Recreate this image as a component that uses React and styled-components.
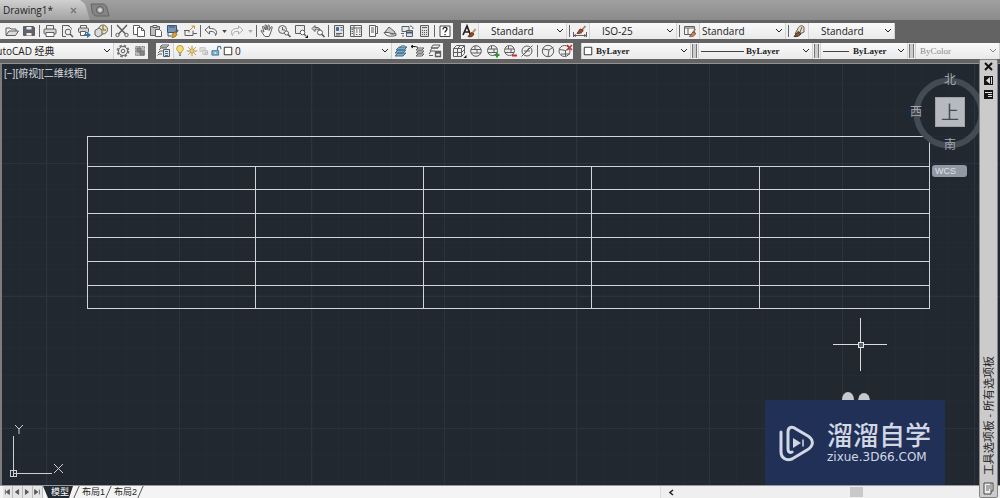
import React from 'react'
import styled, { createGlobalStyle } from 'styled-components'

const GlobalStyle = createGlobalStyle`
* {
    box-sizing: border-box;
}
body {
    margin: 0;
    background: #656565;
    font-family: "Open Sans", "Noto Sans CJK SC", sans-serif;
    font-size: 10px;
    color: #222;
}
button, select, input {
    font: inherit;
    color: inherit;
    margin: 0;
    padding: 0;
    border: 0;
    background: transparent;
}
`;

/* 16x16 toolbar glyphs */
const icons = {
    open: <><path d="M2 12V5h4l1 1h5v2" /><path d="M2 12.500 5 8h9.500l-3 4.500z" fill="#d9dde0" /></>,
    save: <><path d="M2.500 3.500h10l1 1v8h-11z" fill="#596573" /><path d="M5 3.500h6v3.500H5zM5 12.500V9.500h6v3" fill="#eee" /></>,
    print: <><path d="M4.500 6V2.500h7V6" /><rect x="2" y="6" width="12" height="5" rx="1" fill="#d4d6d8" /><path d="M4 9.500h8v4H4z" fill="#fff" /></>,
    preview: <><path d="M10 4V2.500H3.500v11H7M9.500 2.500l3 3v1" /><circle cx="9" cy="9" r="2.800" fill="#eaf1f5" /><path d="m11 11 3 3" strokeWidth="1.600" /></>,
    publish: <><path d="M4.500 5V2.500h6V5" /><rect x="2.500" y="5" width="10" height="4.500" rx="1" fill="#cfd2d5" /><path d="M4.500 8.500h5v4h-5z" fill="#fff" /><path d="M8 11h3V9l4 3-4 3v-2H8z" fill="#2d79b0" stroke="none" /></>,
    sphere: <><circle cx="10" cy="6.500" r="4.500" fill="#f0e3a7" /><path d="M2 7.500 6 5l3 2v5l-4 2-3-2z" fill="#d9dcdd" /><path d="M10 3v4h3" /></>,
    cut: <><path d="m3 2 8.500 9M13 2 4.500 11" strokeWidth="1.500" /><circle cx="3.500" cy="12" r="1.700" /><circle cx="12.500" cy="12" r="1.700" /></>,
    copy: <><path d="M2.500 2.500h6v9h-6z" fill="#fff" /><path d="M6.500 4.500h4l3 3v6h-7z" fill="#fff" /><path d="M10.500 4.500v3h3" /></>,
    paste: <><path d="M2.500 3.500h9v9h-9z" fill="#c0bdb6" /><path d="M5 2.500h4v2H5z" fill="#eee" /><path d="M7.500 6.500h4l2 2v5h-6z" fill="#fff" /></>,
    match: <><path d="M2.500 2.500h9v7h-9z" fill="#7996b5" stroke="#3b5676" /><path d="M4 4h6M3 10v3h3" stroke="#3b5676" /><path d="m13 7-3 3" strokeWidth="2" stroke="#58616a" /><path d="M7 11.500 10 9l2 2.500c-1 2-3 3-5 3z" fill="#dda33a" stroke="#a0702a" /></>,
    block: <><path d="M3 7.500v5h8v-5M2 7.500h5v2" /><path d="m7 8 5-5m-2.500 0h3v3" stroke="#d28d42" /><path d="M11 10.500h4M3 12.500h3" /></>,
    undo: <path d="M6.500 3 2 7l4.500 4V8.500c4-.5 6 1 6 4C15.500 8 12 5 6.500 5.500z" fill="#eef0f2" />,
    redo: <path d="M9.500 3 14 7l-4.500 4V8.500c-4-.5-6 1-6 4C.5 8 4 5 9.500 5.500z" fill="#f3f3f3" stroke="#aaa" />,
    pan: <path d="m5.500 13-3.500-5c0-1 1-1 2 .5L5 9 3.500 4c0-1 1-1 1.500 0l1.500 3L6 2.500c0-1 1.300-1 1.500 0L8 7l1-4.500c.2-1 1.400-.8 1.300.2L10 7.500 12 4c.5-1 1.500-.4 1.200.6L11.500 10 10 13.500H6z" fill="#f5f5f5" />,
    zoom: <><circle cx="6.500" cy="6.500" r="4" fill="#e5e8eb" /><path d="M6.500 4v3h2.500" /><circle cx="10.500" cy="10" r="2" fill="#fff" /><path d="m12 11.500 2.500 2.500" strokeWidth="1.700" /></>,
    zoomWindow: <><path d="M2.500 2.500h9v8h-9z" fill="#e8ebed" /><circle cx="9.500" cy="9.500" r="2.300" fill="#fff" /><path d="m11 11 2 2" strokeWidth="1.500" /><path d="m15 12v3h-3z" fill="#111" stroke="none" /></>,
    zoomPrev: <><path d="M2 5.500 5 2.500v2c3-.5 5 .5 5 2.500-1-1-3-1-5-.5v2z" fill="#d0d3d6" /><circle cx="10" cy="9.500" r="2.500" fill="#fff" /><path d="m11.500 11 3 3" strokeWidth="1.700" /></>,
    props: <><path d="M3.500 2.500h9v11h-9z" fill="#e2e5e8" /><path d="M5.500 4.500h2v3h-2z" fill="#416b96" stroke="#416b96" /><path d="M9.500 4.500h2M9.500 7h2M5 10.500h6M5 12h4" /></>,
    design: <><path d="M2.500 2.500h11v11h-11z" fill="#f2f2f2" /><path d="M6 3v10M2.500 5h11M8 7h1.500M11 7h1.500M8 9h1.500M11 9h1.500M8 11.500h1.500M11 11.500h1.500" /><path d="M3.500 6.500h1.500M3.500 8.500h1.500M3.500 10.500h1.500" stroke="#386ca0" /></>,
    palettes: <><path d="M4.500 2.500h6v11h-6z" fill="#f7f7f7" /><path d="M10.500 3.500h2v7h-2M6 5h3M6 7h3M6 9h3" /></>,
    sheet: <><path d="m3 9 4-5 6 5-1 2z" fill="#ccc" /><path d="M2 9.500h5c1 2 4 2 7 1v2c-4 1-8 1-10-.5z" fill="#eee" /></>,
    markup: <><path d="M3 3.500h7v5H3z" fill="#e4e7e9" /><path d="M5 10.500H2M5 13H3M11 3c2 0 3 1 3 3" /><path d="M7.500 7.500h6v6h-6z" fill="#d7e1ea" /><path d="M7.500 9.500h6" stroke="#345a82" strokeWidth="2" /></>,
    calc: <><path d="M4.500 2.500h8v11h-8z" fill="#ddd" /><path d="M6 4.500h5M6 7.500h1M8 7.500h1M10 7.500h1M6 9.500h1M8 9.500h1M10 9.500h1M6 11.500h1M8 11.500h1M10 11.500h1" /></>,
    textStyle: <><path d="M2 12 6 3l3.500 9M3.500 9h5" strokeWidth="1.700" stroke="#222" /><path d="m14.500 6-3 4" stroke="#b89268" strokeWidth="2" /><path d="m7 13.500 3.500-4L13 11c-1 2.500-3.500 3.500-6 2.500z" fill="#9b4b22" stroke="#6b3218" /></>,
    dimStyle: <><path d="M1.500 9v5M14.500 9v5M2 12.500h12m-10-1-2 1 2 1m8-2 2 1-2 1" /><path d="m13.500 3-3.500 4" stroke="#a28064" strokeWidth="1.800" /><path d="M5 10.500 8 6l3 1c0 2.500-2.500 4-6 3.500z" fill="#a04d2c" stroke="#753a22" /></>,
    tableStyle: <><path d="M2.500 3.500h10v8h-10z" fill="#f6f6f6" /><path d="M2.500 5h10M6 5v6.500" /><path d="M13.500 6 11 9" stroke="#a28064" strokeWidth="1.500" /><path d="M7.500 13.500 11 9l2.500 1c0 2.500-3 4-6 3.500z" fill="#c88962" stroke="#815039" /></>,
    leaderStyle: <><path d="M4 11 7.500 4.500C9 2 13 2 13 5v4l-2 1z" fill="#e9ddbe" /><path d="m11 4-2 5" /><path d="M3 13.500 7 8.500l3 2c-1 2.500-4 3.500-7 3z" fill="#7b573e" stroke="#4b372c" /></>,
    gear: <><circle cx="8" cy="8" r="5.500" strokeDasharray="2.500 1.820" strokeWidth="1.800" stroke="#777" /><circle cx="8" cy="8" r="4.500" fill="#eee" /><circle cx="8" cy="8" r="1.800" /></>,
    workspace: <><path d="M3.500 3.500h9v9h-9z" fill="#bcbcbc" strokeDasharray="2 1" stroke="#888" /><path d="M5 5h4v4H5zM8 8h4v4H8z" fill="#888" stroke="#777" /></>,
    layerProps: <><path d="m4 4 2-2h7l-2 2zM3 7l2-2h6M2 10l2-2h3M1.500 12.500 3 11h3" fill="#f6f6f6" /><path d="M7.500 6.500h6v7h-6z" fill="#dce6ec" /><path d="M9 8.500h3M9 10.500h3M9 12.500h3" stroke="#3c75a1" /></>,
    bulb: <><path d="M6 10c0-2-2.500-2.500-2.500-5a4 4 0 0 1 9 0c0 2.500-2.500 3-2.500 5z" fill="#f4dc6e" stroke="#a28937" /><path d="M6.500 12h3M7 14h2" strokeWidth="1.600" /></>,
    sun: <><circle cx="8" cy="8" r="3" fill="#f1d262" stroke="#9c7b30" /><path d="M8 1v3M8 12v3M1 8h3M12 8h3M3 3l2 2M11 11l2 2M13 3l-2 2M5 11l-2 2" stroke="#b58d38" strokeWidth="1.300" /></>,
    freeze: <><path d="M2.500 3.500h7v5h-7z" fill="#ddd" stroke="#bbb" /><path d="M6.500 7.500h6v5h-6z" fill="#eee" stroke="#b3b3b3" /><circle cx="11" cy="11" r="2" fill="#ddd" stroke="#aaa" /></>,
    lock: <><path d="M10 7V4c0-3 4.500-3 4.500 0v1.500" strokeWidth="1.500" stroke="#456e8d" /><path d="M2.500 7.500h9v6h-9z" fill="#79b4d9" stroke="#386486" /><path d="M7 9.500v2" stroke="#fff" strokeWidth="1.500" /></>,
    swatch: <path d="M3 3h10v10H3z" fill="#fff" stroke="#222" strokeWidth="1.200" />,
    layerCurrent: <><path d="m3 7 3-3h8l-3 3zM2 10l3-3h8l-3 3zM2 13l3-3h8l-3 3z" fill="#77afd1" stroke="#486f88" /><path d="M7 5c1-3 4-3 6-1" stroke="#336c96" /></>,
    layerPrev: <><path d="m6 7 2-2h6l-2 2zM6 10l2-2h6l-2 2zM6 13l2-2h6l-2 2z" fill="#eee" /><path d="M1 3.500h3c2 0 3 .5 4 1M3 2 1 3.500 3 5" stroke="#111" /></>,
    layerState: <><path d="m4 5 2-3h7l-2 3zM3 8l2-3h6M2 11l2-3h4" fill="#eee" /><path d="M8.500 8.500h5v5h-5zM8.500 10h5" fill="#f5f5f5" strokeWidth="1.300" /><path d="M2 12.500h4" /></>,
    mesh: <><path d="m2.500 5.500 3-3h8v8l-3 3h-8zM2.500 5.500h8v8M10.500 5.500l3-3M6.500 5.500v8M2.500 9.500h8l3-3M6.500 5.500l3-3" /><path d="M15.500 12v3h-3z" fill="#111" stroke="none" /></>,
    globe: <><circle cx="8" cy="8" r="5.300" fill="#eee" /><path d="M3 6.500h10M3 10h10M7 3v3.500M9 6.500V10" /></>,
    globeAdd: <><circle cx="7.500" cy="7.500" r="5" fill="#eee" /><path d="M3 6h9M3 9.500h9M6.500 3v3M9 6v3.500" /><path d="M12 9.500v5M9.500 12h5" stroke="#359436" strokeWidth="2" /></>,
    globeRemove: <><circle cx="7.500" cy="7.500" r="5" fill="#eee" /><path d="M3 6h9M3 9.500h9M6.500 3v3M9 6v3.500" /><path d="M10 12.500h5" stroke="#c72f2f" strokeWidth="2" /></>,
    crease: <><circle cx="8" cy="8" r="5" /><path d="M2.500 13.500 13.500 2.500M5 8h6M6 10.500 10 5" /></>,
    solid: <><circle cx="8" cy="8" r="5.700" /><path d="m3 6 6 1 4.500-3M9 7l-1 6.500" /></>,
    solidRemove: <><circle cx="7.500" cy="8" r="5.500" /><path d="m2.500 6.500 6 1 4-2M8.500 7.500v6M4 11h9" /><path d="m10 2 5 5M15 2l-5 5" stroke="#c7302d" strokeWidth="1.600" /></>,
    help: <><path d="M3 3h10v10.500H3z" fill="#fff" stroke="#444" /><path d="M6 6.500c0-3 4-2.500 4-.5C10 7.500 8 8 8 9.500M8 11v1.300" stroke="#222" strokeWidth="1.300" /></>,
};

const Icon = ({ name }) => (
    <Glyph viewBox="0 0 16 16" aria-hidden="true">{icons[name]}</Glyph>
)

const Tool = ({ name, label, disabled }) => (
    <ToolButton aria-label={label || name} disabled={disabled}>
        <Icon name={name} />
    </ToolButton>
)

const Dropdown = ({ label, options, width, indent, disabled, lead, serif }) => (
    <Field $width={width} $disabled={disabled}>
        {lead && <Lead>{lead}</Lead>}
        <Select
            aria-label={label}
            disabled={disabled}
            $indent={indent}
            $serif={serif}
        >
            {options.map((option) => <option key={option}>{option}</option>)}
        </Select>
        <Chevron viewBox="0 0 8 6"><path d="m1 1 3 3 3-3" /></Chevron>
    </Field>
)

const fileTools = ['open', 'save', '|', 'print', 'preview', 'publish', 'sphere', '|', 'cut', 'copy', 'paste', 'match', 'block', '|'];
const viewTools = ['|', 'pan', 'zoom', 'zoomWindow', 'zoomPrev', '|', 'props', 'design', 'palettes', 'sheet', 'markup', 'calc', '|', 'help'];
const meshTools = ['mesh', 'globe', 'globeAdd', 'globeRemove', 'crease', '|', 'solid', 'solidRemove'];

const ToolList = ({ names }) => names.map((name, i) => (
    name === '|' ? <Divider key={i} /> : <Tool key={i} name={name} />
))

const More = ({ label, disabled }) => (
    <MoreButton aria-label={label} disabled={disabled}>
        <svg width="5" height="3" viewBox="0 0 6 4"><path d="M0 0h6L3 4z" fill="currentColor" /></svg>
    </MoreButton>
)

const columns = [256, 424, 592, 760];
const rows = [166, 189, 213, 237, 261, 285];
const range = (from, to, step) => {
    const out = [];
    for (let n = from; n < to; n += step) out.push(Math.round(n));
    return out;
}

const Drawing = () => (
    <DrawingSvg shapeRendering="crispEdges" aria-label="Drawing">
        <g transform="translate(-2 -64)">
            <g fill="#242b34">
                {range(20, 3000, 26.5).map((x) => <rect key={x} x={x} y="64" width="1" height="2000" />)}
                {range(83, 2000, 26.5).map((y) => <rect key={y} x="2" y={y} width="3000" height="1" />)}
            </g>
            <g fill="#2b333d">
                {range(46, 3000, 132.6).map((x) => <rect key={x} x={x} y="64" width="1" height="2000" />)}
                {range(163, 2000, 132.5).map((y) => <rect key={y} x="2" y={y} width="3000" height="1" />)}
            </g>
            <g fill="#d0d5d9">
                {[136, ...rows, 308].map((y) => <rect key={y} x="87" y={y} width="843" height="1" />)}
                <rect x="87" y="136" width="1" height="173" />
                <rect x="929" y="136" width="1" height="173" />
                {columns.map((x) => <rect key={x} x={x - 1} y="166" width="1" height="143" />)}
            </g>
            <g fill="#d8dcdf">
                <rect x="833" y="344" width="54" height="1" />
                <rect x="860" y="318" width="1" height="53" />
                <path d="M858 342h5v5h-5z" fill="#59616a" stroke="#e4e7e9" />
            </g>
        </g>
    </DrawingSvg>
)

const App = () => {
    return (
        <Page>
            <GlobalStyle />
            <TabBar>
                <FileTab>
                    <span>Drawing1*</span>
                    <CloseTab aria-label="Close drawing">
                        <svg width="7" height="7" viewBox="0 0 7 7"><path d="m1 1 5 5M6 1 1 6" stroke="#777" strokeWidth="1.400" /></svg>
                    </CloseTab>
                </FileTab>
                <NewTab aria-label="New drawing">
                    <svg width="20" height="14" viewBox="0 0 20 14">
                        <path d="M1 1h12c2 0 3 1 4 4l2 8H7C4 13 3 11 2 8z" fill="#858585" stroke="#656565" />
                        <circle cx="10" cy="7" r="3.500" fill="#a4a4a4" stroke="#5c5c5c" />
                        <path d="M8 7h4M10 5v4" stroke="#eee" />
                    </svg>
                </NewTab>
            </TabBar>

            <Toolbars>
                <ToolbarRow>
                    <Toolbar $start>
                        <ToolList names={fileTools} />
                        <Tool name="undo" />
                        <More label="Undo list" />
                        <Tool name="redo" disabled />
                        <More label="Redo list" disabled />
                        <ToolList names={viewTools} />
                    </Toolbar>
                    <Toolbar>
                        <Tool name="textStyle" label="Text style" />
                        <Dropdown label="Text style list" options={['Standard']} width={89} indent={12} />
                        <Divider />
                        <Tool name="dimStyle" label="Dimension style" />
                        <Dropdown label="Dimension style list" options={['ISO-25']} width={88} indent={12} />
                        <Divider />
                        <Tool name="tableStyle" label="Table style" />
                        <Dropdown label="Table style list" options={['Standard']} width={87} indent={2} />
                        <Divider />
                        <Tool name="leaderStyle" label="Multileader style" />
                        <Dropdown label="Multileader style list" options={['Standard']} width={87} indent={12} />
                    </Toolbar>
                </ToolbarRow>
                <ToolbarRow>
                    <Toolbar $clipped>
                        <Dropdown label="Workspace" options={['AutoCAD 经典']} width={126} indent={1} />
                        <Tool name="gear" label="Workspace settings" />
                        <Tool name="workspace" label="My workspace" />
                    </Toolbar>
                    <Toolbar>
                        <Tool name="layerProps" label="Layer properties" />
                        <Dropdown
                            label="Layer"
                            options={['0']}
                            width={219}
                            indent={1}
                            lead={['bulb', 'sun', 'freeze', 'lock', 'swatch'].map((name) => <Icon key={name} name={name} />)}
                        />
                        <Tool name="layerCurrent" />
                        <Tool name="layerPrev" />
                        <Tool name="layerState" />
                    </Toolbar>
                    <Toolbar>
                        <ToolList names={meshTools} />
                    </Toolbar>
                    <Toolbar $grow>
                        <Dropdown label="Color" options={['ByLayer']} width={110} serif lead={<Icon name="swatch" />} />
                        <Grip />
                        <Dropdown label="Linetype" options={['ByLayer']} width={115} indent={2} serif lead={<LineSample $width={43} />} />
                        <Grip />
                        <Dropdown label="Lineweight" options={['ByLayer']} width={88} indent={4} serif lead={<LineSample $width={26} />} />
                        <Grip />
                        <Dropdown label="Plot style" options={['ByColor']} serif indent={4} disabled />
                    </Toolbar>
                </ToolbarRow>
            </Toolbars>

            <Canvas>
                <Drawing />
                <ViewLabels>
                    <button>[−]</button>
                    <button>[俯视]</button>
                    <button>[二维线框]</button>
                </ViewLabels>
                <ViewCube>
                    <Compass viewBox="0 0 72 72"><circle cx="36" cy="36" r="32.500" /></Compass>
                    <CubeFace>上</CubeFace>
                    <Direction $area="n">北</Direction>
                    <Direction $area="w">西</Direction>
                    <Direction $area="s">南</Direction>
                    <WcsButton>WCS</WcsButton>
                </ViewCube>
                <UcsIcon viewBox="0 0 66 58">
                    <path d="M4 11v40M4 48h39" shapeRendering="crispEdges" />
                    <path d="M1 45h6v6H1z" shapeRendering="crispEdges" />
                    <path d="m6 0 4 4 4-4M10 4v5M45 39l9 9M54 39l-9 9" />
                </UcsIcon>
                <Watermark>
                    <Ears viewBox="0 0 32 8">
                        <ellipse cx="8" cy="8" rx="6" ry="8" />
                        <ellipse cx="24" cy="9" rx="6" ry="8" />
                    </Ears>
                    <svg width="35" height="38" viewBox="0 0 35 38" fill="none" stroke="#d2d7e4" strokeLinecap="round">
                        <path d="M2 8v20c0 6 5 9 11 7l15-9c7-4 7-10 1-14L17 5C13 2 9 3 9 8v17c0 3 2 4 4 3" strokeWidth="3" />
                        <path d="M14 14v10l8-5z" fill="#d2d7e4" stroke="none" />
                        <path d="M24 16v6" strokeWidth="1.500" />
                    </svg>
                    <Brand>
                        <strong>溜溜自学</strong>
                        <span>zixue.3D66.COM</span>
                    </Brand>
                </Watermark>
            </Canvas>

            <BottomBar>
                <LayoutTabs>
                    {['M3 2v6M8 2 4 5l4 3z', 'M7 2 3 5l4 3z', 'M3 2l4 3-4 3z', 'M2 2l4 3-4 3zM8 2v6'].map((d, i) => (
                        <NavButton key={d} aria-label={['First', 'Previous', 'Next', 'Last'][i]}>
                            <svg width="8" height="8" viewBox="0 0 10 10"><path d={d} fill="#555" stroke="#555" /></svg>
                        </NavButton>
                    ))}
                    <LayoutTab $active>模型</LayoutTab>
                    <Slash />
                    <LayoutTab>布局1</LayoutTab>
                    <Slash />
                    <LayoutTab>布局2</LayoutTab>
                    <Slash />
                </LayoutTabs>
                <ScrollArea>
                    <ScrollButton aria-label="Scroll left">
                        <svg width="5" height="7" viewBox="0 0 5 7"><path d="M4 1 1 3.500 4 6" fill="none" stroke="#222" strokeWidth="1.500" /></svg>
                    </ScrollButton>
                    <ScrollBar type="range" defaultValue="59" aria-label="Horizontal scroll" />
                </ScrollArea>
            </BottomBar>

            <Palette>
                <PaletteButton aria-label="Close palette">
                    <svg width="9" height="9" viewBox="0 0 9 9"><path d="m1 1 7 7M8 1 1 8" stroke="#111" strokeWidth="2" /></svg>
                </PaletteButton>
                <PaletteButton aria-label="Auto-hide">
                    <svg width="9" height="9" viewBox="0 0 9 9"><path d="M0 0h9v9H0z" fill="#151515" /><path d="M6 1v7L2 4.500zM7 1h1v7H7z" fill="#ddd" /></svg>
                </PaletteButton>
                <PaletteButton aria-label="Palette menu">
                    <svg width="9" height="9" viewBox="0 0 9 9"><path d="M0 0h9v9H0z" fill="#151515" /><path d="M1 2h7v1H1zM4 4h4v1H4zM4 6h4v1H4z" fill="#ddd" /></svg>
                </PaletteButton>
                <PaletteTitle>工具选项板 - 所有选项板</PaletteTitle>
                <svg width="11" height="13" viewBox="0 0 11 13"><path d="M1 1h9v8H8v3H1z" fill="#eee" stroke="#444" /><path d="M3 4h4M3 6h4M3 8h3M8 1v8" stroke="#666" /></svg>
            </Palette>
        </Page>
    )
}

export default App

const Page = styled.div`
position: relative;
min-height: 100vh;
display: flex;
flex-direction: column;
overflow: hidden;
`;

const TabBar = styled.header`
height: 20px;
display: flex;
align-items: stretch;
background: linear-gradient(#a0a0a0, #8b8b8b);
`;
const FileTab = styled.div`
width: 90px;
padding: 0 13px 0 3px;
display: flex;
align-items: center;
justify-content: space-between;
line-height: 20px;
background: linear-gradient(#d0d0d0, #a2a2a2);
clip-path: polygon(0 0, 80px 0, 85px 4px, 90px 100%, 0 100%);
`;
const CloseTab = styled.button`
display: flex;
`;
const NewTab = styled.button`
display: flex;
align-items: center;
`;

const Toolbars = styled.div`
padding: 3px 0 4px;
display: flex;
flex-direction: column;
gap: 4px;
background: #636363;
border-bottom: 1px solid #929292;
`;
const ToolbarRow = styled.div`
height: 16px;
display: flex;
gap: 8px;
`;
const Toolbar = styled.div`
display: flex;
align-items: center;
gap: 1px;
min-width: 0;
flex: ${props => props.$grow ? '1' : 'none'};
padding-left: ${props => props.$start ? '4px' : '0'};
margin-left: ${props => props.$clipped ? '-12px' : '0'};
background: #f0f0f0;
`;
const Glyph = styled.svg`
width: 16px;
height: 16px;
flex: none;
fill: none;
stroke: #5f5f5f;
`;
const ToolButton = styled.button`
width: 16px;
height: 16px;
display: flex;
`;
const MoreButton = styled.button`
width: 8px;
display: flex;
justify-content: center;
color: ${props => props.disabled ? '#aaa' : '#444'};
`;
const Divider = styled.span`
width: 3px;
height: 12px;
border-left: 1px solid #666;
margin-left: 1px;
margin-right: -1px;
`;
const Grip = styled.span`
width: 5px;
height: 14px;
border: 1px solid #777;
border-width: 0 1px;
background: #ccc;
`;
const Field = styled.div`
width: ${props => props.$width ? `${props.$width}px` : 'auto'};
flex: ${props => props.$width ? 'none' : '1'};
height: 16px;
display: grid;
grid-template-columns: auto 1fr 10px;
align-items: center;
border: 1px solid #d2d2d2;
border-width: 0 1px;
background: linear-gradient(#fafafa, #e9e9e9);
color: ${props => props.$disabled ? '#8a8a8a' : '#222'};
`;
const Lead = styled.span`
display: flex;
align-items: center;
grid-area: 1 / 1;

svg {
    width: 12px;
    height: 12px;
}
`;
const LineSample = styled.i`
width: ${props => props.$width}px;
height: 1px;
margin-left: 2px;
background: #444;
`;
const Select = styled.select`
grid-area: 1 / 2 / 2 / 4;
width: 100%;
height: 16px;
appearance: none;
padding-left: ${props => props.$indent || 2}px;
font-family: ${props => props.$serif ? '"Liberation Serif", serif' : 'inherit'};
font-size: ${props => props.$serif ? '9px' : '10px'};
font-weight: ${props => props.$serif && !props.disabled ? 'bold' : 'normal'};
line-height: 16px;
opacity: 1;
`;
const Chevron = styled.svg`
grid-area: 1 / 3;
width: 8px;
height: 6px;
fill: none;
stroke: currentColor;
pointer-events: none;
`;

const Canvas = styled.main`
position: relative;
flex: 1;
min-height: 400px;
border-left: 2px solid #7d7d7d;
background: #212830;
overflow: hidden;
`;
const DrawingSvg = styled.svg`
position: absolute;
width: 100%;
height: 100%;
`;
const ViewLabels = styled.div`
position: absolute;
left: 2px;
top: 4px;
display: flex;
color: #d6dade;
font-family: "Liberation Sans", "Noto Sans CJK SC", sans-serif;
line-height: 12px;
`;
const ViewCube = styled.div`
position: absolute;
right: 12px;
top: 10px;
display: grid;
grid-template-columns: 12px 13px 30px 23px;
grid-template-rows: 12px 11px 30px 12px 12px;
grid-template-areas:
    ". . n ."
    ". . . ."
    "w . face ."
    ". . . ."
    ". . s .";
place-items: center;
`;
const Compass = styled.svg`
grid-area: 1 / 1 / 6 / 5;
width: 72px;
height: 72px;
fill: none;
stroke: #434b55;
stroke-width: 6px;
`;
const CubeFace = styled.button`
grid-area: face;
width: 30px;
height: 30px;
background: #b6bac0;
border: 1px solid #9ea3a9;
color: #404b57;
font-size: 18px;
line-height: 26px;
`;
const Direction = styled.button`
grid-area: ${props => props.$area};
color: #a3a8ae;
font-size: 12px;
line-height: 12px;
`;
const WcsButton = styled.button`
position: absolute;
right: 21px;
bottom: -26px;
width: 35px;
height: 12px;
padding-left: 3px;
border-radius: 3px;
background: #9299a5;
color: #dde0e4;
font-family: "Liberation Sans", sans-serif;
font-size: 9px;
line-height: 12px;
text-align: left;
`;
const UcsIcon = styled.svg`
position: absolute;
left: 7px;
bottom: 2px;
width: 66px;
height: 58px;
fill: none;
stroke: #ccd0d4;
`;
const Watermark = styled.div`
position: absolute;
right: 55px;
bottom: 0;
width: 180px;
height: 85px;
padding-left: 14px;
display: flex;
align-items: center;
gap: 13px;
background: #213056;
color: #d2d7e4;
`;
const Ears = styled.svg`
position: absolute;
left: 75px;
bottom: 100%;
width: 32px;
height: 8px;
fill: #c6cacd;
`;
const Brand = styled.div`
display: flex;
flex-direction: column;
padding-bottom: 4px;
white-space: nowrap;

strong {
    font-size: 26px;
    font-weight: 500;
    line-height: 32px;
}
span {
    font-family: "DejaVu Sans", sans-serif;
    font-size: 12px;
    line-height: 12px;
}
`;

const BottomBar = styled.footer`
height: 13px;
display: flex;
background: #efefef;
border-top: 1px solid #999;
`;
const LayoutTabs = styled.nav`
width: 66%;
padding-left: 3px;
display: flex;
overflow: hidden;
background: #f4f4f4;
`;
const NavButton = styled.button`
width: 10px;
display: flex;
align-items: center;
background: #e5e5e5;
border-right: 1px solid #bbb;
`;
const LayoutTab = styled.button`
padding: ${props => props.$active ? '0 4px 0 8px' : '0'};
background: ${props => props.$active ? '#212830' : 'transparent'};
color: ${props => props.$active ? '#fff' : '#222'};
clip-path: ${props => props.$active ? 'polygon(0 0, 100% 0, calc(100% - 4px) 100%, 5px 100%)' : 'none'};
font-family: "Liberation Sans", "Noto Sans CJK SC", sans-serif;
font-size: 9px;
line-height: 12px;
`;
const Slash = styled.i`
width: 1px;
height: 12px;
margin: 0 5px 0 3px;
background: #555;
transform: skewX(-24deg);
`;
const ScrollArea = styled.div`
flex: 1;
padding-right: 20px;
display: flex;
align-items: center;
border-left: 1px solid #ddd;
`;
const ScrollButton = styled.button`
width: 20px;
display: flex;
justify-content: center;
`;
const ScrollBar = styled.input`
flex: 1;
min-width: 0;
height: 10px;
appearance: none;

&::-webkit-slider-thumb{
    appearance: none;
    width: 13px;
    height: 10px;
    background: #c9c9c9;
}
`;

/* floating tool palette docked over the right edge */
const Palette = styled.aside`
position: absolute;
right: 2px;
top: 59px;
bottom: 0;
width: 19px;
padding: 2px 0;
display: flex;
flex-direction: column;
align-items: center;
gap: 5px;
background: #cbcbcb;
border: 1px solid #858585;
border-radius: 2px;
`;
const PaletteButton = styled.button`
display: flex;
`;
const PaletteTitle = styled.h2`
margin: auto 0 2px;
font-size: 11px;
font-weight: normal;
line-height: 16px;
writing-mode: vertical-rl;
text-orientation: sideways;
transform: rotate(180deg);
`;
